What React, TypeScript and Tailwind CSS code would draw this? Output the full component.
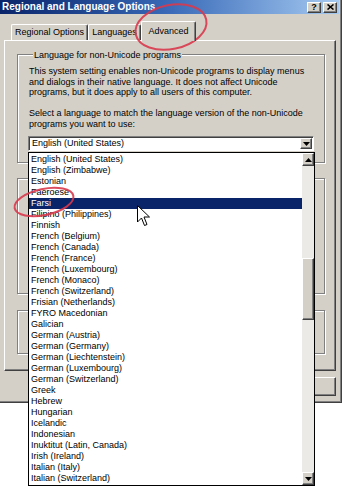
import React from "react"

const languages = [
  "English (United States)",
  "English (Zimbabwe)",
  "Estonian",
  "Faeroese",
  "Farsi",
  "Filipino (Philippines)",
  "Finnish",
  "French (Belgium)",
  "French (Canada)",
  "French (France)",
  "French (Luxembourg)",
  "French (Monaco)",
  "French (Switzerland)",
  "Frisian (Netherlands)",
  "FYRO Macedonian",
  "Galician",
  "German (Austria)",
  "German (Germany)",
  "German (Liechtenstein)",
  "German (Luxembourg)",
  "German (Switzerland)",
  "Greek",
  "Hebrew",
  "Hungarian",
  "Icelandic",
  "Indonesian",
  "Inuktitut (Latin, Canada)",
  "Irish (Ireland)",
  "Italian (Italy)",
  "Italian (Switzerland)",
]

const selected = "Farsi"

// classic 3d edges
const raised =
  "bg-[#d4d0c8] border border-t-white border-l-white border-r-[#404040] border-b-[#404040] shadow-[inset_-1px_-1px_0_#808080]"
const etched =
  "border border-[#808080] shadow-[inset_1px_1px_0_#fff,1px_1px_0_#fff]"
const sunken =
  "bg-white border border-t-[#808080] border-l-[#808080] border-r-white border-b-white shadow-[inset_1px_1px_0_#404040]"

function Triangle({ up }: { up?: boolean }) {
  return (
    <svg width="7" height="4" viewBox="0 0 7 4">
      <path d={up ? "M3.5 0 L7 4 L0 4 Z" : "M0 0 L7 0 L3.5 4 Z"} fill="#000" />
    </svg>
  )
}

function GroupBox({
  label,
  className,
  clip,
  children,
}: {
  label: string
  className: string
  clip?: boolean
  children?: React.ReactNode
}) {
  return (
    <div className={`${etched} w-[308px] ${className}`}>
      {/* caption sits on the top edge; the lower boxes are mostly hidden by the open list */}
      <div
        className={`-mt-[5px] ml-[5px] px-[1px] bg-[#d4d0c8] leading-[10px] whitespace-nowrap ${
          clip ? "w-[5px] overflow-hidden" : "w-fit"
        }`}
      >
        {label}
      </div>
      {children}
    </div>
  )
}

function Tab({ label, width, active }: { label: string; width: string; active?: boolean }) {
  if (active) {
    return (
      <div
        className={`${width} h-[20px] -mb-px relative z-10 flex items-center justify-center bg-[#d4d0c8] border-t border-l border-r border-t-white border-l-white border-r-[#404040] shadow-[inset_-1px_0_0_#808080] rounded-t-[2px]`}
      >
        {label}
      </div>
    )
  }
  return (
    <div
      className={`${width} h-[16px] flex items-center justify-center bg-[#d4d0c8] border-t border-l border-r border-t-white border-l-white border-r-[#404040] shadow-[inset_-1px_0_0_#808080] rounded-t-[2px]`}
    >
      {label}
    </div>
  )
}

export default function App() {
  return (
    <div className="relative w-[345px] h-[502px] overflow-hidden bg-white text-black text-[9px] font-['Liberation_Sans',Arial,sans-serif]">
      {/* dialog window */}
      <div className="w-[342px] h-[403px] flex flex-col bg-[#d4d0c8] border-r border-b border-[#404040] shadow-[inset_-1px_-1px_0_#808080]">
        {/* title bar */}
        <div className="w-[339px] h-[14px] shrink-0 flex items-center pl-[2px] pr-[2px] bg-linear-to-r from-[#0a246a] via-[#3a6ab8] to-[#a6caf0]">
          <span className="text-white font-bold text-[10px] leading-none whitespace-nowrap">
            Regional and Language Options
          </span>
          <div className="ml-auto flex gap-[2px]">
            <div className={`${raised} w-[14px] h-[11px] flex items-center justify-center font-bold text-[9px] leading-none`}>
              ?
            </div>
            <div className={`${raised} w-[14px] h-[11px] flex items-center justify-center`}>
              <svg width="7" height="6" viewBox="0 0 7 6">
                <path d="M0.5 0.5 L6.5 5.5 M6.5 0.5 L0.5 5.5" stroke="#000" strokeWidth="1.6" />
              </svg>
            </div>
          </div>
        </div>

        {/* tabs */}
        <div className="mt-[7px] h-[19px] flex items-end pl-[11px] shrink-0">
          <Tab label="Regional Options" width="w-[77px]" />
          <Tab label="Languages" width="w-[53px]" />
          <Tab label="Advanced" width="w-[55px]" active />
        </div>

        {/* tab panel */}
        <div className="ml-[4px] w-[332px] h-[331px] shrink-0 flex flex-col pl-[12px] border border-t-white border-l-white border-r-[#404040] border-b-[#404040] shadow-[inset_-1px_-1px_0_#808080]">
          <GroupBox label="Language for non-Unicode programs" className="mt-[13px] h-[109px] pl-[10px]">
            <p className="mt-[6px] pl-[1px] leading-[10.5px] whitespace-nowrap">
              This system setting enables non-Unicode programs to display menus
              <br />
              and dialogs in their native language. It does not affect Unicode
              <br />
              programs, but it does apply to all users of this computer.
            </p>
            <p className="mt-[10.5px] pl-[1px] leading-[10.5px] whitespace-nowrap">
              Select a language to match the language version of the non-Unicode
              <br />
              programs you want to use:
            </p>
            <div className={`${sunken} mt-[7px] w-[286px] h-[15px] flex items-center`}>
              <span className="pl-[3px] leading-none whitespace-nowrap">English (United States)</span>
              <div className={`${raised} ml-auto mr-px w-[12px] h-[11px] flex items-center justify-center`}>
                <Triangle />
              </div>
            </div>
          </GroupBox>

          <GroupBox label="Code page conversion tables" clip className="mt-[15px] h-[116px] pl-[10px]">
            <div className={`${sunken} mt-[6px] w-[286px] h-[88px]`} />
          </GroupBox>

          <GroupBox label="Default user account settings" clip className="mt-[16px] h-[44px] pl-[10px]">
            <div className={`${sunken} mt-[9px] w-[11px] h-[11px]`} />
          </GroupBox>
        </div>

        {/* dialog buttons, hidden behind the list except the right edge */}
        <div className="mt-[6px] w-[336px] flex justify-end gap-[6px]">
          <div className={`${raised} w-[64px] h-[19px]`} />
          <div className={`${raised} w-[64px] h-[19px]`} />
          <div className={`${raised} w-[64px] h-[19px]`} />
        </div>
      </div>

      {/* open dropdown list */}
      <div className="absolute left-[28px] top-[152px] w-[287px] h-[334px] flex bg-white border border-black">
        <div className="flex-1 py-px">
          {languages.map((l) => (
            <div
              key={l}
              className={`h-[11px] leading-[11px] pl-[2px] whitespace-nowrap ${
                l === selected ? "bg-[#0a246a] text-white" : ""
              }`}
            >
              {l}
            </div>
          ))}
        </div>
        <div className="w-[12px] flex flex-col bg-[#eceae6]">
          <div className={`${raised} h-[13px] flex items-center justify-center`}>
            <Triangle up />
          </div>
          <div className="flex-1 flex flex-col">
            <div className={`${raised} mt-[92px] h-[62px]`} />
          </div>
          <div className={`${raised} h-[13px] flex items-center justify-center`}>
            <Triangle />
          </div>
        </div>
      </div>

      {/* annotations: red circles and mouse pointer */}
      <svg className="absolute inset-0 pointer-events-none" width="345" height="502">
        <ellipse cx="171" cy="27" rx="36" ry="22" transform="rotate(-12 171 27)" fill="none" stroke="#d9394b" strokeWidth="2" opacity="0.9" />
        <ellipse cx="44" cy="202" rx="30" ry="13" transform="rotate(-12 44 202)" fill="none" stroke="#d9394b" strokeWidth="2" opacity="0.9" />
      </svg>
      <svg className="absolute left-[137px] top-[205px] pointer-events-none" width="14" height="22" viewBox="0 0 14 22">
        <path d="M0.5 0.5 L0.5 17 L4.5 13 L7.5 20.5 L10 19.5 L7 12 L12.5 12 Z" fill="#fff" stroke="#000" strokeWidth="1" strokeLinejoin="round" />
      </svg>
    </div>
  )
}
